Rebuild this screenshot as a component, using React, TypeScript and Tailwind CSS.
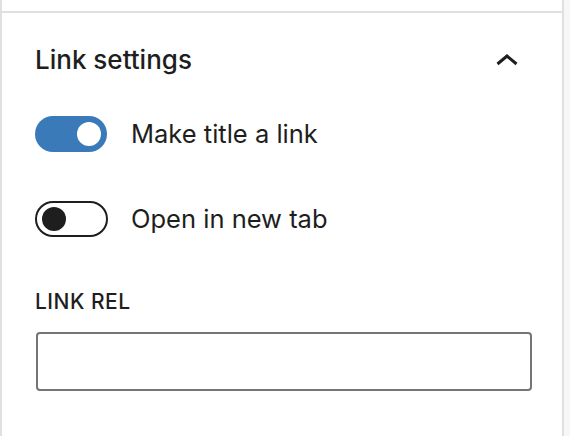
import React from "react";

export default function App() {
  const font = { fontFamily: "Inter, 'Noto Sans', sans-serif" };
  return (
    <div className="flex w-[570px] h-[436px] bg-white text-[#1e1e1e]" style={font}>
      <div className="w-[564px] h-full border-x-2 border-[#e0e0e0] flex flex-col">
        <div className="h-[11px] shrink-0" />
        <div className="border-t-2 border-[#e0e0e0] flex-1 flex flex-col pl-[33px] pr-[44px]">
          <div className="flex items-center justify-between mt-[33px] h-[28px]">
            <span className="text-[26px] leading-[28px] font-medium">Link settings</span>
            <svg width="22" height="14" viewBox="0 0 22 14">
              <path d="M1.5 11 L11 3 L20.5 11" fill="none" stroke="#1e1e1e" strokeWidth="3" />
            </svg>
          </div>
          <div className="flex items-center mt-[42px] h-[36px]">
            <div className="w-[72px] h-[36px] rounded-full bg-[#3a7ab9] flex items-center justify-end pr-[6px]">
              <div className="w-[24px] h-[24px] rounded-full bg-white" />
            </div>
            <span className="ml-[24px] text-[25.5px] leading-[28px]">Make title a link</span>
          </div>
          <div className="flex items-center mt-[49px] h-[36px]">
            <div className="w-[73px] h-[36px] rounded-full border-2 border-[#1e1e1e] bg-white flex items-center pl-[5px]">
              <div className="w-[24px] h-[24px] rounded-full bg-[#1e1e1e]" />
            </div>
            <span className="ml-[23px] text-[25.5px] leading-[28px]">Open in new tab</span>
          </div>
          <div className="mt-[53px] h-[24px] flex items-center">
            <span className="text-[21px] leading-[24px] font-medium uppercase tracking-[0.5px]">Link rel</span>
          </div>
          <div className="mt-[18px] ml-[1px] w-[496px] h-[59px] border-2 border-[#757575] rounded-[4px]" />
        </div>
      </div>
      <div className="flex-1 bg-[#f7f7f7]" />
    </div>
  );
}
